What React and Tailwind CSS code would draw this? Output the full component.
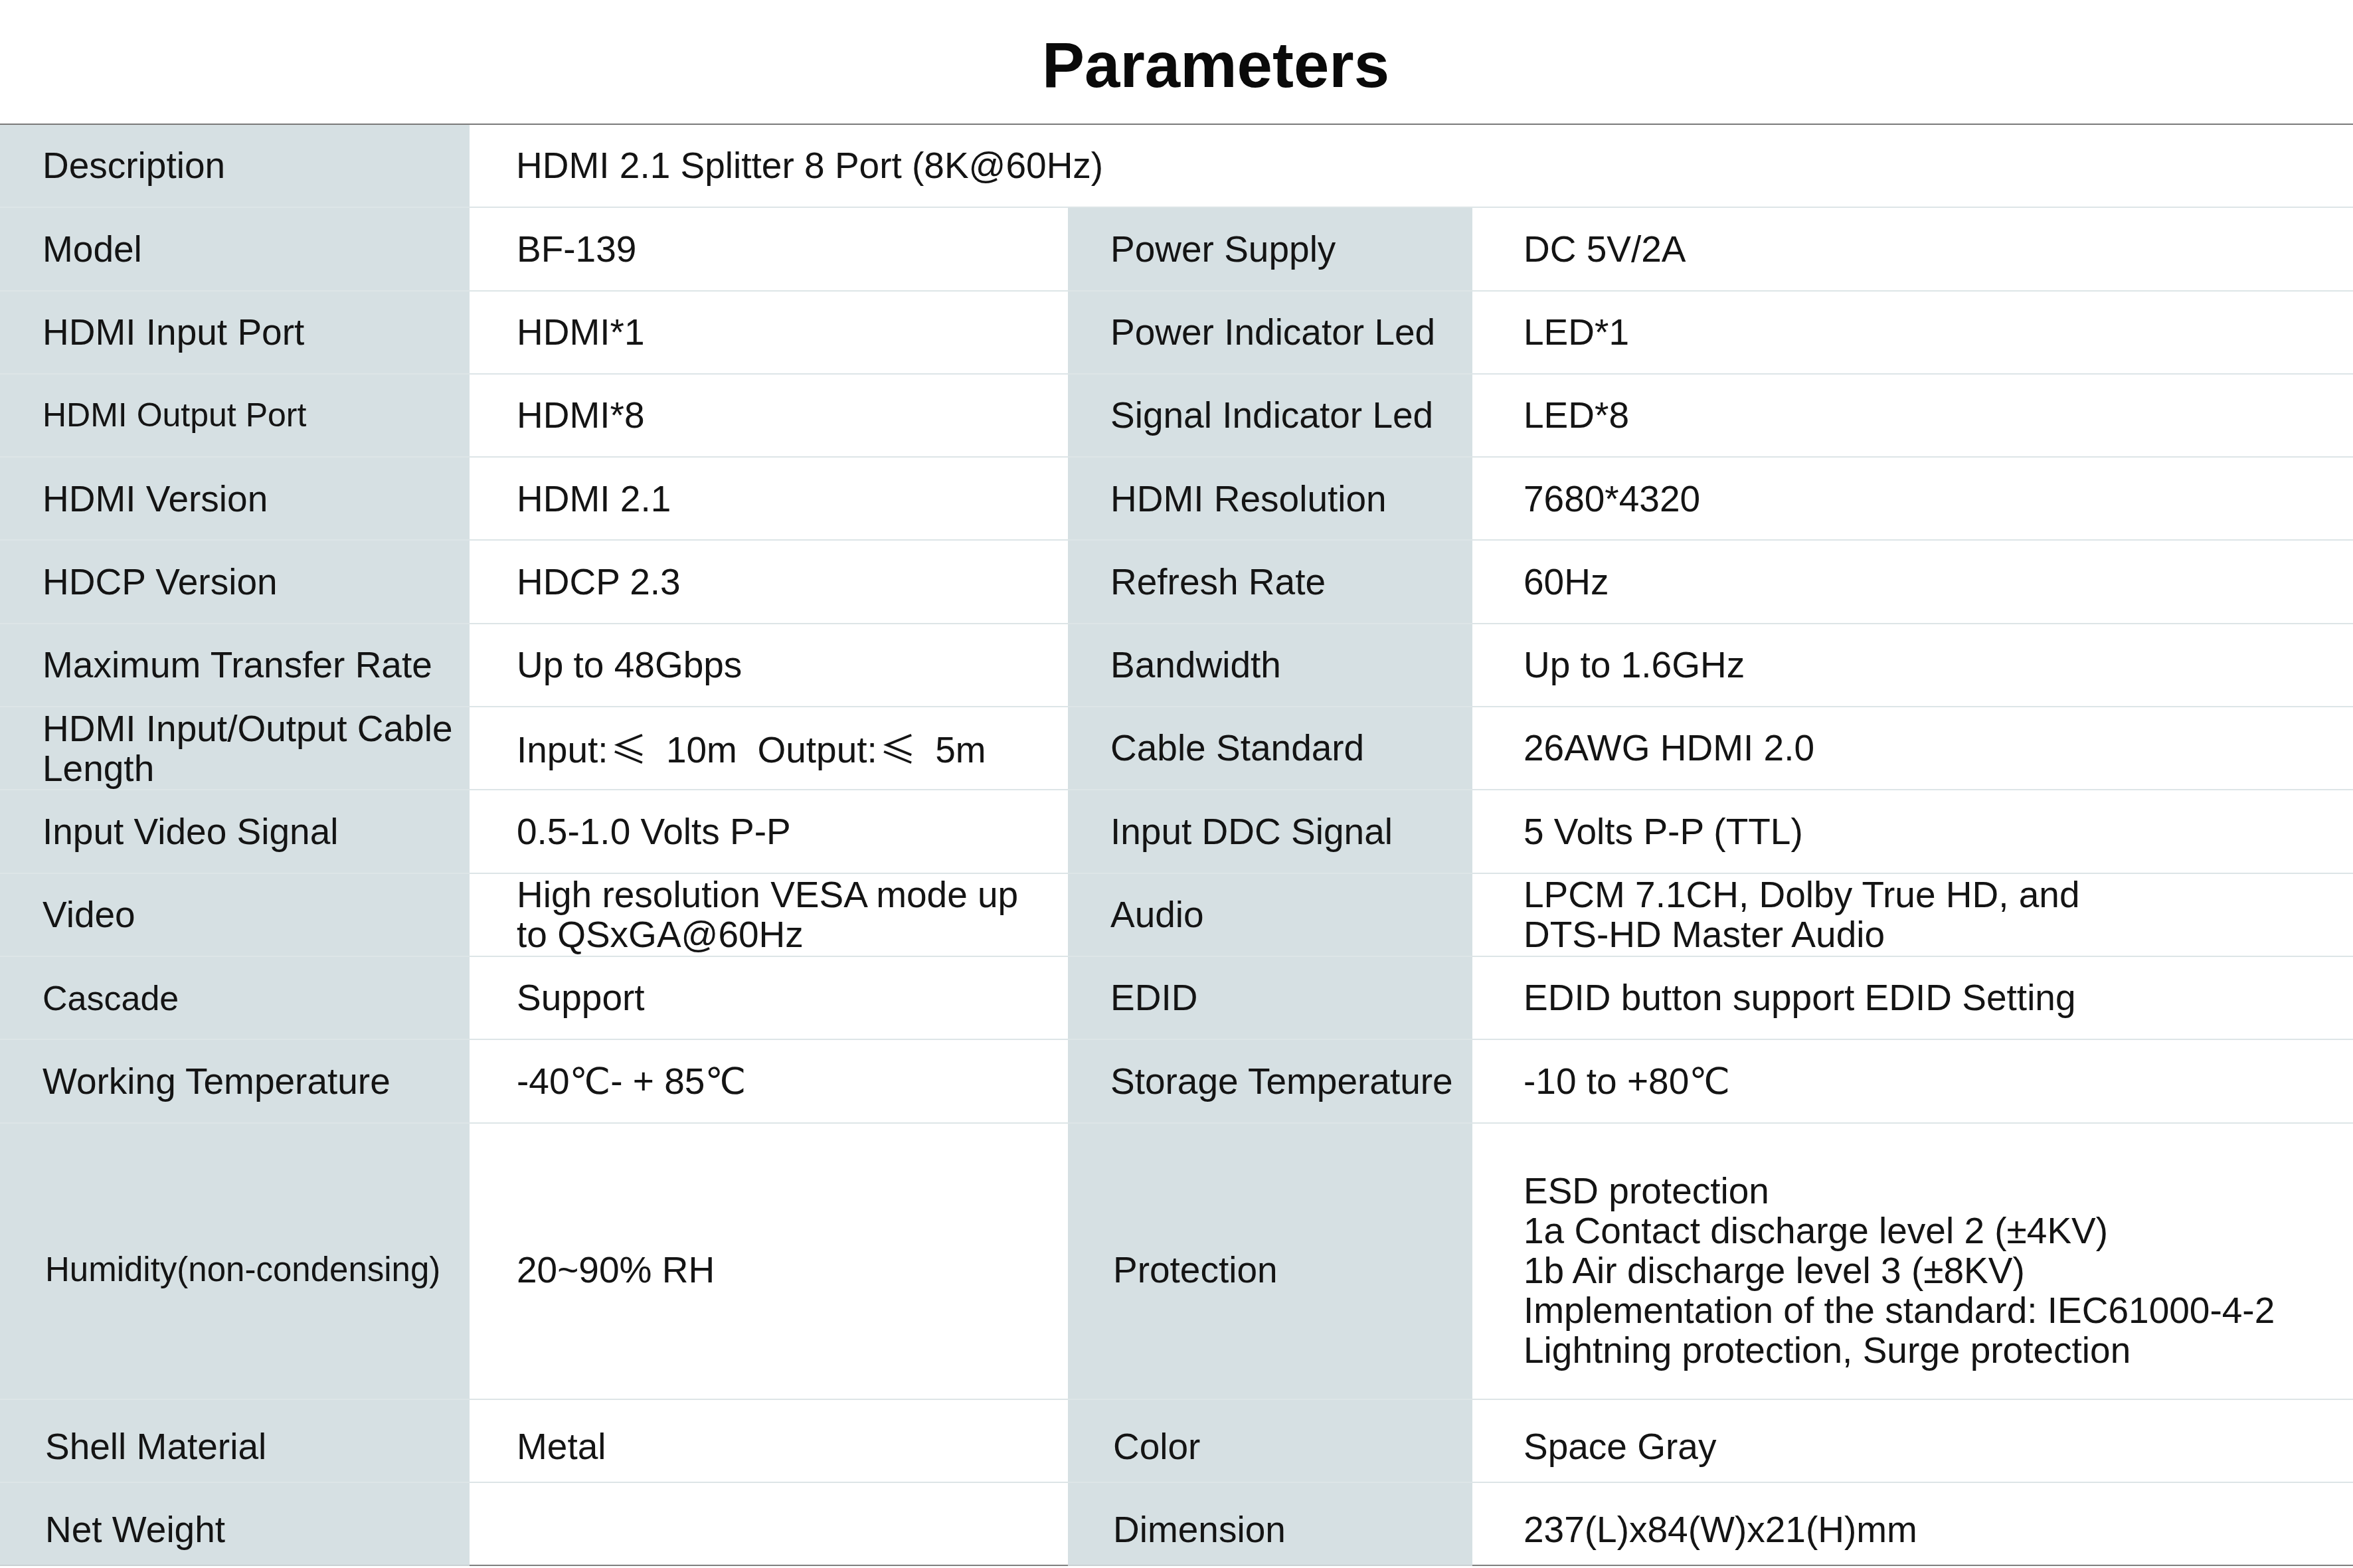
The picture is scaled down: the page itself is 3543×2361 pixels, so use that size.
import React from "react";

const le = (
  <span className="pl-[4px] pr-[13px]" style={{ fontFamily: '"Noto Sans CJK SC", sans-serif' }}>
    ≤
  </span>
);

const rows = [
  { l: "Description", v: "HDMI 2.1 Splitter 8 Port (8K@60Hz)", wide: true },
  { l: "Model", v: "BF-139", l2: "Power Supply", v2: "DC 5V/2A" },
  { l: "HDMI Input Port", v: "HDMI*1", l2: "Power Indicator Led", v2: "LED*1" },
  { l: "HDMI Output Port", v: "HDMI*8", l2: "Signal Indicator Led", v2: "LED*8", small: "text-[50px]" },
  { l: "HDMI Version", v: "HDMI 2.1", l2: "HDMI Resolution", v2: "7680*4320" },
  { l: "HDCP Version", v: "HDCP 2.3", l2: "Refresh Rate", v2: "60Hz" },
  { l: "Maximum Transfer Rate", v: "Up to 48Gbps", l2: "Bandwidth", v2: "Up to 1.6GHz" },
  {
    l: ["HDMI Input/Output Cable", "Length"],
    v: (
      <>
        Input:{le} 10m{"  "}Output:{le} 5m
      </>
    ),
    l2: "Cable Standard",
    v2: "26AWG HDMI 2.0",
  },
  { l: "Input Video Signal", v: "0.5-1.0 Volts P-P", l2: "Input DDC Signal", v2: "5 Volts P-P (TTL)" },
  {
    l: "Video",
    v: ["High resolution VESA mode up", "to QSxGA@60Hz"],
    l2: "Audio",
    v2: ["LPCM 7.1CH, Dolby True HD, and", "DTS-HD Master Audio"],
  },
  { l: "Cascade", v: "Support", l2: "EDID", v2: "EDID button support EDID Setting", small: "text-[52px]" },
  { l: "Working Temperature", v: "-40℃- + 85℃", l2: "Storage Temperature", v2: "-10 to +80℃" },
  {
    l: "Humidity(non-condensing)",
    v: "20~90% RH",
    l2: "Protection",
    v2: [
      "ESD protection",
      "1a Contact discharge level 2 (±4KV)",
      "1b Air discharge level 3 (±8KV)",
      "Implementation of the standard: IEC61000-4-2",
      "Lightning protection, Surge protection",
    ],
    tall: true,
    shift: true,
    small: "text-[51px]",
  },
  { l: "Shell Material", v: "Metal", l2: "Color", v2: "Space Gray", shift: true },
  { l: "Net Weight", v: "", l2: "Dimension", v2: "237(L)x84(W)x21(H)mm", last: true, shift: true },
];

const Lines = ({ text }) =>
  Array.isArray(text) ? (
    <div className="leading-[60px]">
      {text.map((t) => (
        <div key={t} className="whitespace-pre">{t}</div>
      ))}
    </div>
  ) : (
    <span className="whitespace-pre">{text}</span>
  );

const Cell = ({ text, gray, pad, h, last, size, span }) => (
  <div
    className={`flex items-center ${h} ${pad} ${size || "text-[55px]"} ${
      gray ? "bg-[#d6e0e3]" : "bg-white"
    } ${last ? (gray ? "border-b-2 border-[#c9d1d4]" : "border-b-2 border-[#7f7f7f]") : "border-b-2 border-[#dde5e7]"} ${
      span ? "col-span-3" : ""
    }`}
  >
    <Lines text={text} />
  </div>
);

export default function App() {
  return (
    <div
      className="w-[3543px] h-[2361px] bg-white text-[#141414] overflow-hidden"
      style={{ fontFamily: '"Liberation Sans", "DejaVu Sans", "Noto Sans CJK SC", sans-serif' }}
    >
      <div className="h-[188px] pt-[50px] pl-[118px] text-center border-b-2 border-[#7a7a7a]">
        <h1 className="text-[96px] font-bold leading-none text-[#0a0a0a]">Parameters</h1>
      </div>
      <div className="grid grid-cols-[707px_901px_609px_1fr]">
        {rows.map((r, i) => {
          const h = r.tall ? "h-[416px] pt-[28px]" : r.shift ? "h-[125.3px] pt-[18px]" : "h-[125.3px]";
          const lp = r.shift ? "pl-[68px]" : "pl-[64px]";
          return (
            <React.Fragment key={i}>
              <Cell text={r.l} gray pad={lp} h={h} last={r.last} size={r.small} />
              {r.wide ? (
                <Cell text={r.v} pad="pl-[70px]" h={h} span />
              ) : (
                <>
                  <Cell text={r.v} pad="pl-[71px]" h={h} last={r.last} />
                  <Cell text={r.l2} gray pad={lp} h={h} last={r.last} />
                  <Cell text={r.v2} pad="pl-[77px]" h={h} last={r.last} />
                </>
              )}
            </React.Fragment>
          );
        })}
      </div>
    </div>
  );
}
